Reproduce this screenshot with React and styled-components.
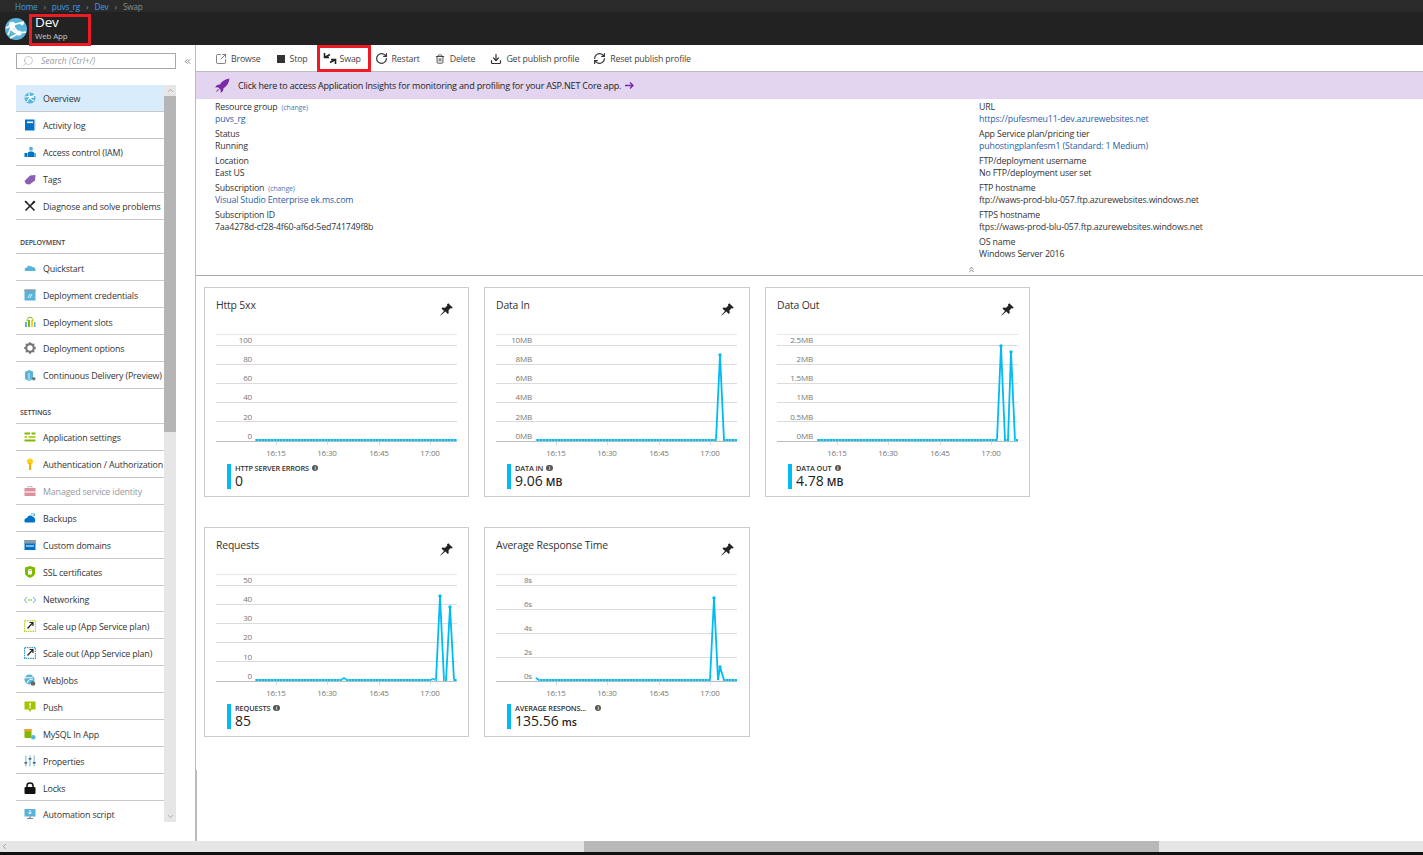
import React from 'react';
import styled, { createGlobalStyle } from 'styled-components';
import { SquareArrowOutUpRight, RotateCw, Trash2, Download, RefreshCw, Search, ChevronsLeft, ChevronsUp, ChevronUp, ChevronDown, ChevronLeft } from 'lucide-react';

const GlobalStyle = createGlobalStyle`
  html, body { margin: 0; padding: 0; background: #fff; overflow: hidden; }
  body { font-family: "Open Sans", "Liberation Sans", sans-serif; font-size: 9px; color: #333; letter-spacing: -0.16px; }
`;

const Page = styled.div`
  width: 1423px;
  height: 855px;
  display: flex;
  flex-direction: column;
  position: relative;
  overflow: hidden;
`;

const Breadcrumb = styled.nav`
  height: 12px;
  background: #2a2a2a;
  display: flex;
  align-items: center;
  gap: 6px;
  padding-left: 15px;
  font-size: 8.2px;
  color: #999;
  a { color: #3f9be0; }
  span { color: #8a8a8a; }
`;

const Header = styled.header`
  height: 33px;
  background: #222;
  display: flex;
  align-items: center;
  padding-left: 5px;
  gap: 8px;
  position: relative;
`;

const HeaderText = styled.div`
  display: flex;
  flex-direction: column;
  color: #fff;
  margin-top: -2px;
`;

const HeaderTitle = styled.div`
  font-size: 13.5px;
  line-height: 15px;
`;

const HeaderSub = styled.div`
  font-size: 8px;
  line-height: 11px;
  color: #c4c4c4;
`;

const RedBox = styled.div`
  position: absolute;
  left: 29px;
  top: 2px;
  width: 62px;
  height: 32px;
  box-sizing: border-box;
  border: 3px solid #ed1c24;
`;

const Body = styled.div`
  flex: 1;
  display: flex;
  min-height: 0;
`;

const Sidebar = styled.aside`
  width: 196px;
  box-sizing: border-box;
  border-right: 1px solid #bbb;
  padding: 8px 0 0 16px;
  flex-shrink: 0;
  position: relative;

  &::after {
    content: '';
    position: absolute;
    right: -2px;
    top: 725px;
    bottom: 0;
    width: 1px;
    background: #bbb;
  }
`;

const SearchRow = styled.div`
  display: flex;
  align-items: center;
  height: 16px;
`;

const SearchBox = styled.div`
  width: 160px;
  height: 16px;
  box-sizing: border-box;
  border: 1px solid #aaa;
  display: flex;
  align-items: center;
  padding-left: 5px;
  gap: 7px;
  font-style: italic;
  color: #999;
  font-size: 8.6px;
  letter-spacing: 0;
  svg { transform: scaleX(-1); }
`;

const Collapse = styled.div`
  margin-left: 7px;
  display: flex;
  color: #555;
`;

const NavWrap = styled.div`
  margin-top: 16px;
  height: 737px;
  width: 160px;
  display: flex;
  overflow: hidden;
`;

const NavList = styled.div`
  width: 148px;
  flex-shrink: 0;
`;

const NavRow = styled.div`
  height: ${p => (p.$short ? 26 : 27)}px;
  box-sizing: border-box;
  border-bottom: 1px solid #c8c8c8;
  display: flex;
  align-items: center;
  padding-left: 8px;
  padding-top: ${p => (p.$low ? 2 : 0)}px;
  gap: 7px;
  white-space: nowrap;
  font-size: 8.9px;
  background: ${p => (p.$active ? '#d9ecfb' : 'transparent')};
  color: ${p => (p.$muted ? '#999' : '#333')};
  svg { flex-shrink: 0; opacity: ${p => (p.$muted ? 0.55 : 1)}; }
`;

const NavHeading = styled.div`
  height: ${p => p.$h}px;
  box-sizing: border-box;
  border-bottom: 1px solid #c8c8c8;
  display: flex;
  align-items: flex-end;
  padding: 0 0 6px 4px;
  font-size: 7px;
  font-weight: 600;
  color: #444;
`;

const Scrollbar = styled.div`
  width: 12px;
  background: #e6e6e6;
  display: flex;
  flex-direction: column;
  align-items: center;
`;

const ScrollArrow = styled.div`
  height: 11px;
  display: flex;
  align-items: center;
  justify-content: center;
  color: #999;
`;

const ScrollThumb = styled.div`
  width: 100%;
  height: 336px;
  background: #b5b5b5;
`;

const ScrollFill = styled.div`
  flex: 1;
`;

const Main = styled.main`
  flex: 1;
  display: flex;
  flex-direction: column;
  min-width: 0;
`;

const Toolbar = styled.div`
  height: 27px;
  box-sizing: border-box;
  display: flex;
  align-items: stretch;
  padding-left: 19px;
  border-bottom: 1px solid #bbb;
`;

const ToolButton = styled.div`
  display: flex;
  align-items: center;
  gap: ${p => p.$gap || 4}px;
  margin-right: ${p => p.$mr || 0}px;
  padding-top: 1px;
  font-size: 8.8px;
  color: #444;
  svg { flex-shrink: 0; color: #333; }
`;

const SwapButton = styled(ToolButton)`
  box-sizing: border-box;
  width: 54px;
  height: 27px;
  border: 3px solid #ed1c24;
  padding: 0 0 0 3px;
  margin-right: 4px;
  gap: 3px;
`;

const StopSquare = styled.span`
  width: 8px;
  height: 8px;
  background: #333;
`;

const Banner = styled.div`
  height: 27px;
  background: #e3d5ef;
  display: flex;
  align-items: center;
  padding-left: 19px;
  gap: 8px;
  font-size: 9px;
  letter-spacing: -0.18px;
  color: #222;
`;

const BannerArrowWrap = styled.div`
  display: flex;
  margin-left: -4px;
`;

const Essentials = styled.section`
  height: 177px;
  box-sizing: border-box;
  border-bottom: 1px solid #aaa;
  display: flex;
  padding: 2px 0 0 19px;
  position: relative;
`;

const EssentialsCol = styled.div`
  width: ${p => p.$w}px;
  flex-shrink: 0;
`;

const Field = styled.div`
  margin-bottom: 3px;
  line-height: 12px;
  font-size: 8.8px;
  color: #333;
`;

const FieldValue = styled.div`
  color: ${p => (p.$link ? '#1f5fa8' : '#333')};
`;

const Change = styled.span`
  font-size: 7px;
  line-height: 0;
  color: #5a78b0;
  margin-left: 4px;
`;

const CollapseChevron = styled.div`
  position: absolute;
  left: 771px;
  bottom: 1px;
  display: flex;
  color: #555;
`;

const TileArea = styled.div`
  display: grid;
  grid-template-columns: 265px 266px 265px;
  grid-auto-rows: 210px;
  column-gap: 15px;
  row-gap: 30px;
  padding: 11px 0 0 8px;
`;

const Tile = styled.article`
  box-sizing: border-box;
  border: 1px solid #ccc;
  padding: 0 11px;
  display: flex;
  flex-direction: column;
`;

const TileHead = styled.div`
  height: 46px;
  display: flex;
  justify-content: space-between;
  padding-top: 10px;
  box-sizing: border-box;
  font-size: 10.4px;
  color: #333;
`;

const PinWrap = styled.div`
  margin: 5px 4px 0 0;
`;

const Legend = styled.div`
  display: flex;
  margin: 6px 0 0 11px;
  height: 25px;
  gap: 4px;
`;

const LegendBar = styled.div`
  width: 4px;
  background: #00bcf2;
`;

const LegendLabel = styled.div`
  display: flex;
  align-items: center;
  height: 8px;
  margin-bottom: 1px;
  font-size: 7.4px;
  font-weight: 600;
  color: #333;
  gap: ${p => p.$gap || 3}px;
`;

const LegendValue = styled.div`
  font-size: 14px;
  line-height: 16px;
  color: #222;
  letter-spacing: 0;
  span { font-size: 10.5px; font-weight: 600; margin-left: 3px; }
`;

const InfoDot = styled.span`
  width: 6.5px;
  height: 6.5px;
  border-radius: 50%;
  background: #555;
  color: #fff;
  font-size: 5.5px;
  line-height: 6.5px;
  text-align: center;
  letter-spacing: 0;
`;

const HScroll = styled.div`
  height: 11px;
  background: #e6e6e6;
  display: flex;
  align-items: center;
  color: #888;
  position: relative;
`;

const HThumb = styled.div`
  position: absolute;
  left: 584px;
  width: 575px;
  top: 0;
  bottom: 0;
  background: #b8b8b8;
`;

const BottomEdge = styled.div`
  height: 3px;
  background: #111;
`;

const Logo = () => (
  <svg width="22" height="22" viewBox="0 0 22 22">
    <circle cx="11" cy="11" r="11" fill="#59b4d9" />
    <path d="M7 7L1 10M7 7L19 4M7 7L14 15M14 15L5 20M14 15L21 14M7 7L3 17" stroke="#fff" strokeWidth="1.6" fill="none" />
    <path d="M7 7Q5 13 14 15" stroke="#fff" strokeWidth="3" fill="none" />
    <circle cx="7" cy="7" r="3.2" fill="#fff" />
    <circle cx="14" cy="15" r="2.6" fill="#fff" />
    <circle cx="17" cy="5.500" r="1.800" fill="#fff" />
  </svg>
);

const SwapIcon = () => (
  <svg width="14" height="13" viewBox="0 0 14 13" fill="none" stroke="#222" strokeWidth="1.6">
    <path d="M1.500 1v4.500H6M1.800 5.200L7 2.500M12.500 12V7.500H8M12.200 7.800L7 10.500" />
  </svg>
);

const Rocket = () => (
  <svg width="15" height="15" viewBox="0 0 15 15">
    <path d="M14.500.5C10 1 7 3 4.800 6.500L2 7 0 9.500l3-.3L5.800 12l-.3 3 2.500-2 .5-2.800C12 8 14 5 14.500.5z" fill="#7a2aa8" />
    <path d="M3 11l-2.500 3.500L4 12z" fill="#7a2aa8" />
  </svg>
);

const BannerArrow = () => (
  <svg width="9" height="7" viewBox="0 0 9 7" fill="none" stroke="#7a2aa8" strokeWidth="1.4">
    <path d="M0 3.500h8M5 .5l3 3-3 3" />
  </svg>
);

const PinIcon = () => (
  <svg width="13" height="13" viewBox="0 0 13 13" fill="#222">
    <path d="M8.300.2l4.500 4.500-1 .8-.9-.4-2.400 2.200.2 2.700-.9.9-2.500-2.500L.8 12.600l-.5-.4 3.700-4.200-2.500-2.500.9-.9 2.700.2 2.200-2.400-.4-.9z" />
  </svg>
);

const icon = (children, w = 12) => (
  <svg width={w} height="12" viewBox="0 0 12 12">{children}</svg>
);

const navIcons = {
  overview: icon(<><circle cx="6" cy="6" r="5.500" fill="#59b4d9" /><path d="M1 5c3-1 6 1 10-2M3 10c1-3 3-5 7-5M5 1c0 4 2 7 5 8" stroke="#fff" strokeWidth="1.100" fill="none" /></>),
  log: icon(<><rect x="1" y="0.500" width="9.500" height="11" fill="#0072c6" /><rect x="10.500" y="1" width="1" height="10" fill="#9fc8e8" /><rect x="3" y="2.500" width="6" height="1.600" fill="#fff" /></>),
  iam: icon(<><circle cx="7" cy="2.800" r="2" fill="#59b4d9" /><path d="M4 11V7c0-1 1-1.500 3-1.500s3 .5 3 1.500v4z" fill="#0072c6" /><rect x="0.500" y="7" width="3" height="4" fill="#0072c6" /><rect x="10" y="7" width="2" height="4" fill="#59b4d9" /></>),
  tags: icon(<path d="M0.500 8L6 2.500 11.500 2 11 7.500 5.500 11.500 2 11z" fill="#8a5fb4" />),
  diagnose: icon(<><path d="M1.500 1.500l9 9" stroke="#222" strokeWidth="1.600" /><path d="M10.500 1.500l-9 9" stroke="#222" strokeWidth="1.600" /><path d="M7.500 3.500L10 .5l1.500 1.500-3 2.500zM.5 1.500l1-1 2 2-1 1z" fill="#222" /></>),
  quick: icon(<path d="M1 9c-1-2 0-3.500 2-3.500C4 3 5.500 3 6 5l1-1.500 1 1.500c2-.5 4 1 3.500 4z" fill="#59b4d9" />),
  cred: icon(<><rect x="0.500" y="0.500" width="11" height="11" fill="#59b4d9" /><rect x="0.500" y="0.500" width="11" height="2" fill="#8a9ba8" /><path d="M4 9l2-4M6 9l2-4" stroke="#fff" strokeWidth="0.800" /></>),
  slots: icon(<><rect x="1" y="6" width="2" height="5" fill="#59b4d9" /><rect x="4" y="4" width="2" height="7" fill="#7fba00" /><rect x="7" y="4" width="2" height="7" fill="#fcd116" /><rect x="10" y="6" width="1.500" height="5" fill="#59b4d9" /><path d="M3 5c0-5 6-5 6 0" stroke="#7fba00" fill="none" /></>),
  options: icon(<><circle cx="6" cy="6" r="3.800" fill="none" stroke="#777" strokeWidth="2.200" /><path d="M6 0v2M6 10v2M0 6h2M10 6h2M1.800 1.800l1.400 1.400M8.800 8.800l1.400 1.400M1.800 10.200l1.400-1.400M8.800 3.200l1.400-1.400" stroke="#777" strokeWidth="1.400" /></>),
  delivery: icon(<><path d="M1 3l4-2 4 1.500V10l-4 2-4-2z" fill="#59b4d9" /><path d="M5 4v7" stroke="#fff" strokeWidth="0.800" /><circle cx="9.800" cy="9.800" r="1.800" fill="#777" /></>),
  app: icon(<><rect x="0.500" y="1.500" width="11" height="2" fill="#7fba00" /><rect x="0.500" y="5" width="11" height="2" fill="#b8d432" /><rect x="0.500" y="8.500" width="11" height="2" fill="#7fba00" /><rect x="6" y="1" width="1.500" height="3" fill="#fff" /><rect x="3" y="4.500" width="1.500" height="3" fill="#fff" /></>),
  auth: icon(<><circle cx="6" cy="3.500" r="3" fill="#fcd116" /><rect x="5" y="5" width="2.200" height="7" fill="#f0b400" /></>),
  identity: icon(<><rect x="0.500" y="3" width="11" height="8" fill="#c0394b" /><path d="M4 3V1.500h4V3" stroke="#888" fill="none" /><rect x="0.500" y="6.500" width="11" height="1" fill="#fff" /></>),
  backups: icon(<><path d="M1 10.500C-.5 8 1 6 3 6c.5-2.500 4-3.500 6-1 2 0 3 3.500 1.500 5.500z" fill="#0072c6" /><path d="M7 2c2-1 3 0 3.500 1.500M10.500 1.500v2.200H8.500" stroke="#59b4d9" fill="none" /></>),
  domains: icon(<><rect x="0.500" y="1" width="11" height="10" fill="#0072c6" /><rect x="0.500" y="1" width="11" height="3.500" fill="#8a9ba8" /><rect x="2" y="6.500" width="8" height="1" fill="#fff" /></>),
  ssl: icon(<><path d="M6 0l5 1.500V7c0 2.500-3 4-5 5-2-1-5-2.500-5-5V1.500z" fill="#7fba00" /><rect x="4" y="5" width="4" height="3.500" fill="#fff" /><path d="M4.800 5V3.500h2.400V5" stroke="#fff" fill="none" /></>),
  network: icon(<><path d="M3 3L.5 6 3 9M9 3l2.500 3L9 9" stroke="#59b4d9" fill="none" /><circle cx="4.500" cy="6" r="0.700" fill="#7fba00" /><circle cx="6" cy="6" r="0.700" fill="#7fba00" /><circle cx="7.500" cy="6" r="0.700" fill="#59b4d9" /></>),
  scaleUp: icon(<><rect x="0.600" y="0.600" width="10.800" height="10.800" fill="none" stroke="#b8d432" strokeWidth="1.200" strokeDasharray="1.500 .8" /><path d="M3.500 8.500l5-5.500M5.500 2.500h3.500v3.500" stroke="#222" strokeWidth="1.200" fill="none" /></>),
  scaleOut: icon(<><rect x="0.600" y="0.600" width="10.800" height="10.800" fill="none" stroke="#3999c6" strokeWidth="1.200" strokeDasharray="1.500 .8" /><path d="M3.500 8.500l5-5.500M5.500 2.500h3.500v3.500" stroke="#222" strokeWidth="1.200" fill="none" /></>),
  webjobs: icon(<><circle cx="5.500" cy="5.500" r="5" fill="#59b4d9" /><path d="M1 4c3-1 5 1 9-2M3 9c1-3 3-4 6-4" stroke="#fff" fill="none" /><circle cx="9" cy="9.500" r="2.300" fill="#666" /></>),
  push: icon(<><path d="M0.500 0.500h11v8H7.500L6 11 4.500 8.500h-4z" fill="#a4c400" /><rect x="5.400" y="2" width="1.300" height="3.500" fill="#fff" /><rect x="5.400" y="6" width="1.300" height="1.300" fill="#fff" /></>),
  mysql: icon(<><rect x="0.500" y="1" width="7" height="9" rx="1" fill="#7fba00" /><rect x="0.500" y="1" width="7" height="2.500" fill="#f0a030" /><circle cx="9.300" cy="9.300" r="2.300" fill="#59b4d9" /></>),
  props: icon(<><rect x="1" y="0.500" width="1.600" height="11" fill="#9fd4ea" /><rect x="5.200" y="0.500" width="1.600" height="11" fill="#9fd4ea" /><rect x="9.400" y="0.500" width="1.600" height="11" fill="#9fd4ea" /><rect x="0.500" y="7" width="2.600" height="1.600" fill="#555" /><rect x="4.700" y="3" width="2.600" height="1.600" fill="#555" /><rect x="8.900" y="7" width="2.600" height="1.600" fill="#555" /></>),
  locks: icon(<><rect x="0.500" y="5" width="11" height="7" rx="1" fill="#111" /><path d="M3 6V3.500c0-3.500 6-3.500 6 0V6" stroke="#111" strokeWidth="1.500" fill="none" /></>),
  automation: icon(<><rect x="0.500" y="1" width="11" height="7.500" fill="#59b4d9" /><path d="M6 2v4M4.500 4.500L6 6l1.500-1.500" stroke="#fff" fill="none" /><rect x="3" y="10" width="6" height="1" fill="#888" /><rect x="5.300" y="8.500" width="1.400" height="1.500" fill="#888" /></>),
};

const navGroups = [
  { rows: [
    ['overview', 'Overview', { $active: true }],
    ['log', 'Activity log'],
    ['iam', 'Access control (IAM)'],
    ['tags', 'Tags'],
    ['diagnose', 'Diagnose and solve problems'],
  ] },
  { title: 'DEPLOYMENT', h: 34, rows: [
    ['quick', 'Quickstart', { $low: true }],
    ['cred', 'Deployment credentials', { $low: true }],
    ['slots', 'Deployment slots', { $low: true }],
    ['options', 'Deployment options'],
    ['delivery', 'Continuous Delivery (Preview)'],
  ] },
  { title: 'SETTINGS', h: 35, rows: [
    ['app', 'Application settings'],
    ['auth', 'Authentication / Authorization'],
    ['identity', 'Managed service identity', { $muted: true }],
    ['backups', 'Backups'],
    ['domains', 'Custom domains'],
    ['ssl', 'SSL certificates'],
    ['network', 'Networking', { $short: true, $low: true }],
    ['scaleUp', 'Scale up (App Service plan)', { $low: true }],
    ['scaleOut', 'Scale out (App Service plan)', { $low: true }],
    ['webjobs', 'WebJobs', { $low: true }],
    ['push', 'Push', { $low: true }],
    ['mysql', 'MySQL In App', { $low: true }],
    ['props', 'Properties', { $low: true }],
    ['locks', 'Locks', { $low: true }],
    ['automation', 'Automation script'],
  ] },
];

const leftFields = [
  { label: 'Resource group', change: true, value: 'puvs_rg', link: true },
  { label: 'Status', value: 'Running' },
  { label: 'Location', value: 'East US' },
  { label: 'Subscription', change: true, value: 'Visual Studio Enterprise ek.ms.com', link: true },
  { label: 'Subscription ID', value: '7aa4278d-cf28-4f60-af6d-5ed741749f8b' },
];

const rightFields = [
  { label: 'URL', value: 'https://pufesmeu11-dev.azurewebsites.net', link: true },
  { label: 'App Service plan/pricing tier', value: 'puhostingplanfesm1 (Standard: 1 Medium)', link: true },
  { label: 'FTP/deployment username', value: 'No FTP/deployment user set' },
  { label: 'FTP hostname', value: 'ftp://waws-prod-blu-057.ftp.azurewebsites.windows.net' },
  { label: 'FTPS hostname', value: 'ftps://waws-prod-blu-057.ftp.azurewebsites.windows.net' },
  { label: 'OS name', value: 'Windows Server 2016' },
];

const evenAxis = { grid: [11, 30, 49, 68, 87], labelY: [6, 25, 44, 63, 83, 102] };
const wideAxis = { grid: [11, 35, 59, 83], labelY: [6, 30, 54, 78, 102] };

const tiles = [
  { title: 'Http 5xx', axis: evenAxis, labels: ['100', '80', '60', '40', '20', '0'],
    points: [[39, 106], [241, 106]], peaks: [], legend: 'HTTP SERVER ERRORS', value: '0' },
  { title: 'Data In', axis: evenAxis, labels: ['10MB', '8MB', '6MB', '4MB', '2MB', '0MB'],
    points: [[40, 106], [220, 106], [224, 21], [228, 106], [241, 106]], peaks: [[224, 21]], legend: 'DATA IN', value: '9.06', unit: 'MB' },
  { title: 'Data Out', axis: evenAxis, labels: ['2.5MB', '2MB', '1.5MB', '1MB', '0.5MB', '0MB'],
    points: [[40, 106], [220, 106], [224, 12], [228, 106], [231, 106], [234, 18], [238, 106], [241, 106]], peaks: [[224, 12], [234, 18]], legend: 'DATA OUT', value: '4.78', unit: 'MB' },
  { title: 'Requests', axis: evenAxis, labels: ['50', '40', '30', '20', '10', '0'],
    points: [[39, 106], [125, 106], [128, 104], [131, 106], [214, 106], [217, 105], [220, 106], [224, 22], [228, 106], [230, 106], [234, 33], [238, 106], [241, 106]], peaks: [[224, 22], [234, 33]], legend: 'REQUESTS', value: '85' },
  { title: 'Average Response Time', axis: wideAxis, labels: ['8s', '6s', '4s', '2s', '0s'],
    points: [[40, 104], [43, 106], [214, 106], [218, 24], [222, 106], [224, 93], [228, 106], [241, 106]], peaks: [[218, 24], [224, 93]], legend: 'AVERAGE RESPONS...', infoGap: 9, value: '135.56', unit: 'ms' },
];

const timeTicks = [[60, '16:15'], [111, '16:30'], [163, '16:45'], [214, '17:00']];

const Chart = ({ axis, labels, points, peaks }) => {
  const line = points.map(p => p.join(',')).join(' ');
  return (
    <svg width="241" height="124" viewBox="0 0 241 124">
      <line x1="0" x2="241" y1="0.5" y2="0.5" stroke="#e8e8e8" />
      {axis.grid.map(y => <line key={y} x1="0" x2="241" y1={y + 0.5} y2={y + 0.5} stroke="#dcdcdc" />)}
      <line x1="0" x2="241" y1="107.5" y2="107.5" stroke="#bdbdbd" />
      {labels.map((t, i) => (
        <text key={t} x="36" y={axis.labelY[i] + 3} textAnchor="end" fontSize="8" fill="#777" fontFamily="Open Sans, sans-serif">{t}</text>
      ))}
      {timeTicks.map(([x, t]) => (
        <g key={t}>
          <line x1={x + 0.5} x2={x + 0.5} y1="108" y2="111" stroke="#ddd" />
          <text x={x} y="122" textAnchor="middle" fontSize="8" fill="#777" fontFamily="Open Sans, sans-serif">{t}</text>
        </g>
      ))}
      <polyline points={line} fill="none" stroke="#00bcf2" strokeWidth="1.8" />
      <line x1={points[0][0]} x2="241" y1="106" y2="106" stroke="#bdeefc" strokeWidth="1.6" strokeDasharray="1 2" opacity={0.7} />
      {peaks.map(([x, y]) => <circle key={x} cx={x} cy={y} r="1.700" fill="#00bcf2" />)}
    </svg>
  );
};

const MetricTile = ({ tile }) => (
  <Tile>
    <TileHead>
      <span>{tile.title}</span>
      <PinWrap><PinIcon /></PinWrap>
    </TileHead>
    <Chart axis={tile.axis} labels={tile.labels} points={tile.points} peaks={tile.peaks} />
    <Legend>
      <LegendBar />
      <div>
        <LegendLabel $gap={tile.infoGap}>{tile.legend}<InfoDot>i</InfoDot></LegendLabel>
        <LegendValue>{tile.value}{tile.unit && <span>{tile.unit}</span>}</LegendValue>
      </div>
    </Legend>
  </Tile>
);

const FieldBlock = ({ field }) => (
  <Field>
    <div>{field.label}{field.change && <Change>(change)</Change>}</div>
    <FieldValue $link={field.link}>{field.value}</FieldValue>
  </Field>
);

export default function App() {
  return (
    <Page>
      <GlobalStyle />
      <Breadcrumb>
        <a>Home</a><span>›</span><a>puvs_rg</a><span>›</span><a>Dev</a><span>›</span><span>Swap</span>
      </Breadcrumb>
      <Header>
        <Logo />
        <HeaderText>
          <HeaderTitle>Dev</HeaderTitle>
          <HeaderSub>Web App</HeaderSub>
        </HeaderText>
        <RedBox />
      </Header>
      <Body>
        <Sidebar>
          <SearchRow>
            <SearchBox><Search size={12} strokeWidth={1} />Search (Ctrl+/)</SearchBox>
            <Collapse><ChevronsLeft size={9} /></Collapse>
          </SearchRow>
          <NavWrap>
            <NavList>
              {navGroups.map((group, i) => (
                <div key={i}>
                  {group.title && <NavHeading $h={group.h}>{group.title}</NavHeading>}
                  {group.rows.map(([key, label, props]) => (
                    <NavRow key={key} {...props}>{navIcons[key]}{label}</NavRow>
                  ))}
                </div>
              ))}
            </NavList>
            <Scrollbar>
              <ScrollArrow><ChevronUp size={9} /></ScrollArrow>
              <ScrollThumb />
              <ScrollFill />
              <ScrollArrow><ChevronDown size={9} /></ScrollArrow>
            </Scrollbar>
          </NavWrap>
        </Sidebar>
        <Main>
          <Toolbar>
            <ToolButton $mr={16}><SquareArrowOutUpRight size={12} strokeWidth={1.2} />Browse</ToolButton>
            <ToolButton $mr={9} $gap={5}><StopSquare />Stop</ToolButton>
            <SwapButton><SwapIcon />Swap</SwapButton>
            <ToolButton $mr={15}><RotateCw size={13} strokeWidth={2.2} />Restart</ToolButton>
            <ToolButton $mr={15} $gap={5}><Trash2 size={10} strokeWidth={2} />Delete</ToolButton>
            <ToolButton $mr={14}><Download size={12} strokeWidth={2.4} />Get publish profile</ToolButton>
            <ToolButton><RefreshCw size={13} strokeWidth={2.2} />Reset publish profile</ToolButton>
          </Toolbar>
          <Banner>
            <Rocket />
            <span>Click here to access Application Insights for monitoring and profiling for your ASP.NET Core app.</span>
            <BannerArrowWrap><BannerArrow /></BannerArrowWrap>
          </Banner>
          <Essentials>
            <EssentialsCol $w={764}>
              {leftFields.map(f => <FieldBlock key={f.label} field={f} />)}
            </EssentialsCol>
            <EssentialsCol $w={300}>
              {rightFields.map(f => <FieldBlock key={f.label} field={f} />)}
            </EssentialsCol>
            <CollapseChevron><ChevronsUp size={9} /></CollapseChevron>
          </Essentials>
          <TileArea>
            {tiles.map(t => <MetricTile key={t.title} tile={t} />)}
          </TileArea>
        </Main>
      </Body>
      <HScroll><ChevronLeft size={9} /><HThumb /></HScroll>
      <BottomEdge />
    </Page>
  );
}
